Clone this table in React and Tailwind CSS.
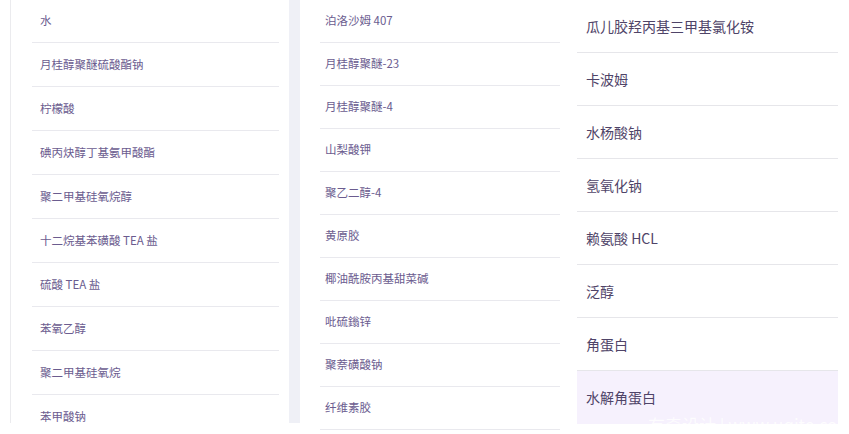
import React from "react";

const left = [
  "水",
  "月桂醇聚醚硫酸酯钠",
  "柠檬酸",
  "碘丙炔醇丁基氨甲酸酯",
  "聚二甲基硅氧烷醇",
  "十二烷基苯磺酸 TEA 盐",
  "硫酸 TEA 盐",
  "苯氧乙醇",
  "聚二甲基硅氧烷",
  "苯甲酸钠",
];

const middle = [
  "泊洛沙姆 407",
  "月桂醇聚醚-23",
  "月桂醇聚醚-4",
  "山梨酸钾",
  "聚乙二醇-4",
  "黄原胶",
  "椰油酰胺丙基甜菜碱",
  "吡硫鎓锌",
  "聚萘磺酸钠",
  "纤维素胶",
];

const right = [
  "瓜儿胶羟丙基三甲基氯化铵",
  "卡波姆",
  "水杨酸钠",
  "氢氧化钠",
  "赖氨酸 HCL",
  "泛醇",
  "角蛋白",
  "水解角蛋白",
];

const font = {
  fontFamily: '"Noto Sans CJK SC", "Noto Sans", sans-serif',
};

export default function App() {
  return (
    <div
      className="relative w-[849px] h-[434px] bg-white overflow-hidden"
      style={font}
    >
      <div className="flex h-[423px]">
        <div className="w-[10px] shrink-0" />
        {/* left panel */}
        <div className="w-[279px] shrink-0 border-l border-[#ebebee] pl-[21px] pr-[10px] -mt-[1px] flex flex-col">
          {left.map((t) => (
            <div
              key={t}
              className="h-[44px] shrink-0 flex items-center pl-[8px] border-b border-[#e9e9ee] text-[11.5px] text-[#6b5c8f]"
            >
              {t}
            </div>
          ))}
        </div>
        {/* gray strip */}
        <div className="w-[11px] shrink-0 bg-[#eff0f6]" />
        {/* middle panel */}
        <div className="w-[277px] shrink-0 pl-[20px] pr-[17px] flex flex-col">
          {middle.map((t) => (
            <div
              key={t}
              className="h-[43px] shrink-0 flex items-center pl-[5px] border-b border-[#e9e9ee] text-[11.5px] text-[#6b5c8f]"
            >
              {t}
            </div>
          ))}
        </div>
        {/* right panel */}
        <div className="w-[261px] shrink-0 flex flex-col">
          {right.map((t, i) => (
            <div
              key={t}
              className={
                i === right.length - 1
                  ? "h-[53px] shrink-0 flex items-center pl-[9px] bg-[#f6f1fd] text-[14px] text-[#4f4468]"
                  : "h-[53px] shrink-0 flex items-center pl-[9px] border-b border-[#e6e6ea] text-[14px] text-[#4f4468]"
              }
            >
              {t}
            </div>
          ))}
        </div>
      </div>
      <div className="absolute left-[648px] top-[416px] text-[17px] leading-[17px] text-white opacity-80 whitespace-nowrap">
        有奇设计 | www.uqite.com
      </div>
    </div>
  );
}
